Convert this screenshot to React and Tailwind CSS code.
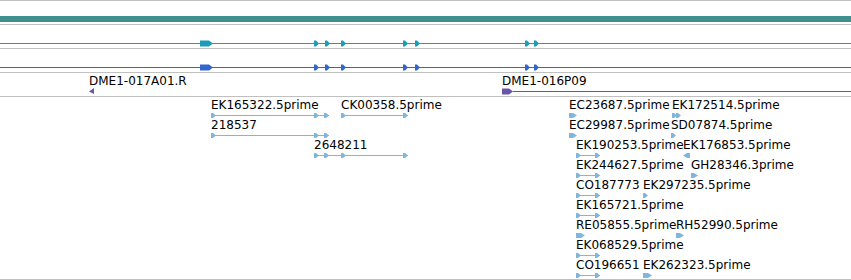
import React from "react";

const TEAL = "#1b9cb9";
const BLUE = "#3366cc";
const PURPLE = "#6a56a8";
const EST = "#7fb6de";

const EXON_X = [314, 325, 341, 403, 415, 525, 534];

// small right-pointing arrow head, tip centred on cy
const arrow = (x, cy, h, w) =>
  `${x},${cy - h} ${x + 2},${cy - h} ${x + w},${cy} ${x + 2},${cy + h} ${x},${cy + h}`;

const block = (x, cy, h, len, w) =>
  `${x},${cy - h} ${x + len},${cy - h} ${x + len + w},${cy} ${x + len},${cy + h} ${x},${cy + h}`;

function GeneTrack({ color }) {
  return (
    <div className="relative h-[24px] border-b border-[#c0c0c0]">
      <svg className="absolute inset-0" width="851" height="23">
        <rect x="0" y="18" width="851" height="1" fill={color} />
        <polygon points={block(200, 18.5, 3, 9, 4)} fill={color} />
        {EXON_X.map((x) => (
          <polygon key={x} points={arrow(x, 18.5, 3, 5)} fill={color} />
        ))}
      </svg>
    </div>
  );
}

// EST rows: each entry is [textX, label, features]
const EST_ROWS = [
  [
    { x: 211, label: "EK165322.5prime", line: [211, 329], arrows: [211, 314, 324] },
    { x: 341, label: "CK00358.5prime", line: [341, 408], arrows: [341, 403] },
    { x: 569, label: "EC23687.5prime", block: [569, 4] },
    { x: 672, label: "EK172514.5prime", arrows: [672, 676] },
  ],
  [
    { x: 211, label: "218537", line: [211, 329], arrows: [211, 314, 324] },
    { x: 569, label: "EC29987.5prime", block: [569, 4] },
    { x: 671, label: "SD07874.5prime", arrows: [671] },
  ],
  [
    { x: 314, label: "2648211", line: [314, 408], arrows: [314, 324, 341, 403] },
    { x: 576, label: "EK190253.5prime", line: [576, 600], arrows: [576, 595] },
    { x: 683, label: "EK176853.5prime", left: 683 },
  ],
  [
    { x: 576, label: "EK244627.5prime", line: [576, 600], arrows: [576, 595] },
    { x: 691, label: "GH28346.3prime", block: [691, 3] },
  ],
  [
    { x: 576, label: "CO187773", line: [576, 600], arrows: [576, 595] },
    { x: 643, label: "EK297235.5prime", arrows: [643] },
  ],
  [{ x: 576, label: "EK165721.5prime", line: [576, 600], arrows: [576, 595] }],
  [
    { x: 576, label: "RE05855.5prime", block: [576, 5] },
    { x: 676, label: "RH52990.5prime", block: [676, 4] },
  ],
  [{ x: 576, label: "EK068529.5prime", line: [576, 600], arrows: [576, 595] }],
  [
    { x: 576, label: "CO196651", line: [576, 600], arrows: [576, 595] },
    { x: 643, label: "EK262323.5prime", block: [643, 5] },
  ],
];

export default function App() {
  return (
    <div
      className="w-[851px] h-[280px] bg-white overflow-hidden text-black"
      style={{ fontFamily: "'DejaVu Sans', 'Liberation Sans', sans-serif" }}
    >
      <div className="border-t border-[#c0c0c0]">
        {/* coverage bar */}
        <div className="h-[24px] border-b border-[#c0c0c0] pt-[15px]">
          <div className="h-[6px] bg-[#3f8f8f]" />
        </div>

        <GeneTrack color={TEAL} />
        <GeneTrack color={BLUE} />

        {/* clones */}
        <div className="relative h-[24px] border-b border-[#c0c0c0] text-[12px] leading-[14px]">
          <span className="absolute left-[89px] top-[1px] whitespace-nowrap">DME1-017A01.R</span>
          <span className="absolute left-[502px] top-[1px] whitespace-nowrap">DME1-016P09</span>
          <svg className="absolute inset-0" width="851" height="23">
            <polygon points="94,15 89,18.5 94,21" fill={PURPLE} />
            <polygon points={block(502, 18.5, 3, 7, 4)} fill={PURPLE} />
            <rect x="513" y="18" width="338" height="1" fill={PURPLE} />
          </svg>
        </div>

        {/* ESTs */}
        <div className="relative h-[183px] border-b border-[#c0c0c0] text-[12px] leading-[14px]">
          <svg className="absolute inset-0" width="851" height="182">
            {EST_ROWS.map((row, i) =>
              row.map((f) => {
                const cy = 18.5 + i * 20;
                return (
                  <g key={f.label} fill={EST}>
                    {f.line && (
                      <rect x={f.line[0]} y={cy - 0.5} width={f.line[1] - f.line[0]} height="1" />
                    )}
                    {f.arrows &&
                      f.arrows.map((x) => <polygon key={x} points={arrow(x, cy, 2.5, 5)} />)}
                    {f.block && <polygon points={block(f.block[0], cy, 2.5, f.block[1], 4)} />}
                    {f.left && (
                      <polygon points={`${f.left},${cy} ${f.left + 4},${cy - 2.5} ${f.left + 7},${cy - 2.5} ${f.left + 7},${cy + 2.5} ${f.left + 4},${cy + 2.5}`} />
                    )}
                  </g>
                );
              })
            )}
          </svg>
          {EST_ROWS.map((row, i) =>
            row.map((f) => (
              <span
                key={f.label}
                className="absolute whitespace-nowrap"
                style={{ left: f.x, top: 1 + i * 20 }}
              >
                {f.label}
              </span>
            ))
          )}
        </div>
      </div>
    </div>
  );
}
